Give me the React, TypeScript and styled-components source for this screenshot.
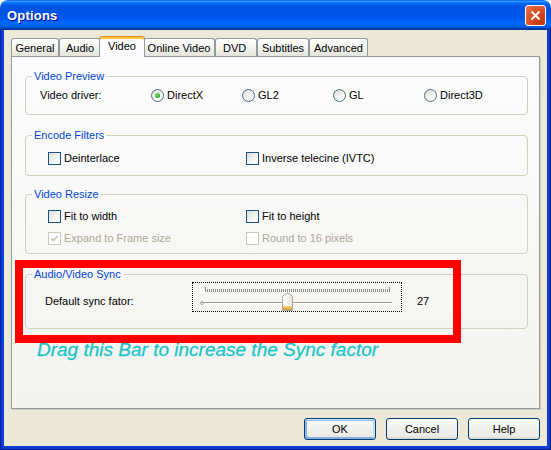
import React from 'react';
import styled, { createGlobalStyle } from 'styled-components';

const GlobalStyle = createGlobalStyle`
  html, body {
    margin: 0;
    padding: 0;
    background: #ffffff;
  }
  body {
    font-family: "Liberation Sans", Arial, sans-serif;
    font-size: 11px;
    color: #000000;
  }
`;

const Window = styled.div`
  width: 551px;
  height: 450px;
  display: flex;
  flex-direction: column;
`;

const TitleBar = styled.div`
  height: 30px;
  flex: none;
  box-sizing: border-box;
  border-radius: 8px 8px 0 0;
  padding: 0 5px 0 7px;
  display: flex;
  align-items: center;
  justify-content: space-between;
  background: linear-gradient(
    180deg,
    #0058ee 0%,
    #3593ff 4%,
    #288eff 6%,
    #127dff 8%,
    #036ffc 10%,
    #0262ee 14%,
    #0057e5 20%,
    #0054e3 24%,
    #0055eb 56%,
    #005bf5 66%,
    #026afe 76%,
    #0062ef 86%,
    #0052d6 92%,
    #0040ab 94%,
    #003092 100%
  );
`;

const Title = styled.span`
  color: #ffffff;
  font-weight: bold;
  font-size: 13px;
  letter-spacing: 0.2px;
  text-shadow: 1px 1px #0f1089;
`;

const CloseButton = styled.div`
  width: 21px;
  height: 21px;
  box-sizing: border-box;
  border: 1px solid #ffffff;
  border-radius: 3px;
  display: flex;
  align-items: center;
  justify-content: center;
  background: radial-gradient(circle at 85% 85%, #c53a11 0%, #d5471f 45%, #e6764e 100%);
`;

const Frame = styled.div`
  flex: 1;
  display: flex;
  padding: 0 4px 4px;
  background: #0a3fd2;
  box-shadow: inset 1px 0 #0019a0, inset -1px 0 #001a8c, inset 0 -1px #001a8c;
`;

const Body = styled.div`
  flex: 1;
  background: #ece9d8;
  padding: 6px 7px 0;
  display: flex;
  flex-direction: column;
`;

const TabStrip = styled.div`
  display: flex;
  align-items: flex-end;
  height: 21px;
  margin-bottom: -1px;
  position: relative;
  z-index: 1;
`;

const Tab = styled.div<{ $w: number; $active?: boolean; $left?: boolean }>`
  box-sizing: border-box;
  width: ${(p) => (p.$active ? p.$w + 4 : p.$w)}px;
  height: ${(p) => (p.$active ? 21 : 18)}px;
  margin: 0 ${(p) => (p.$active ? -2 : 0)}px ${(p) => (p.$active ? 0 : 1)}px;
  display: flex;
  align-items: center;
  justify-content: ${(p) => (p.$left ? 'flex-start' : 'center')};
  padding: ${(p) => (p.$left ? '0 0 0 7px' : '0')};
  padding-bottom: ${(p) => (p.$active ? 2 : 0)}px;
  border: 1px solid #919b9c;
  border-bottom: none;
  border-radius: 3px 3px 0 0;
  position: relative;
  z-index: ${(p) => (p.$active ? 2 : 1)};
  background: ${(p) =>
    p.$active ? '#fcfcfe' : 'linear-gradient(180deg, #ffffff 0%, #f3f3ef 55%, #e4e3dc 100%)'};
  border-top-color: ${(p) => (p.$active ? '#e68b2c' : '#919b9c')};
  box-shadow: ${(p) => (p.$active ? 'inset 0 2px #ffc73c' : 'none')};
`;

const Panel = styled.div`
  box-sizing: border-box;
  height: 353px;
  border: 1px solid #919b9c;
  background: linear-gradient(180deg, #fcfcfe 0%, #f4f3ee 100%);
  box-shadow: 1px 1px #d0cebf;
  padding: 13px 11px 0 13px;
  display: flex;
  flex-direction: column;
  position: relative;
`;

const Group = styled.fieldset<{ $h: number; $mt: number }>`
  box-sizing: border-box;
  height: ${(p) => p.$h}px;
  margin: ${(p) => p.$mt}px 0 0;
  padding: 0;
  min-width: 0;
  border: 1px solid #d0d0bf;
  border-radius: 4px;
`;

const Legend = styled.legend`
  color: #0046d5;
  line-height: 13px;
  padding: 0 2px;
  margin-left: 6px;
`;

const DriverRow = styled.div`
  display: grid;
  grid-template-columns: 111px 91px 91px 91px 1fr;
  align-items: center;
  height: 16px;
  margin-top: 4px;
  padding-left: 14px;
`;

const CheckRow = styled.div<{ $mt: number }>`
  display: grid;
  grid-template-columns: 198px 1fr;
  align-items: center;
  height: 16px;
  margin-top: ${(p) => p.$mt}px;
  padding-left: 22px;
`;

const Option = styled.label<{ $disabled?: boolean }>`
  display: inline-flex;
  align-items: center;
  gap: 3px;
  white-space: nowrap;
  color: ${(p) => (p.$disabled ? '#aca899' : '#000000')};
`;

const RadioDot = styled.span<{ $checked?: boolean }>`
  width: 13px;
  height: 13px;
  box-sizing: border-box;
  border-radius: 50%;
  border: 1px solid #4f6a86;
  background: linear-gradient(135deg, #dcdcd5 0%, #f2f2ee 50%, #ffffff 100%);
  display: inline-flex;
  align-items: center;
  justify-content: center;
  &::after {
    content: '';
    display: ${(p) => (p.$checked ? 'block' : 'none')};
    width: 5px;
    height: 5px;
    border-radius: 50%;
    background: radial-gradient(circle at 35% 35%, #7ee07a 0%, #21a121 80%);
  }
`;

const CheckBox = styled.span<{ $disabled?: boolean }>`
  width: 13px;
  height: 13px;
  box-sizing: border-box;
  border: 1px solid ${(p) => (p.$disabled ? '#cac8bb' : '#1c5180')};
  background: ${(p) =>
    p.$disabled ? '#ffffff' : 'linear-gradient(135deg, #dcdcd7 0%, #f5f5f2 60%, #ffffff 100%)'};
  display: inline-flex;
  align-items: center;
  justify-content: center;
`;

const SyncRow = styled.div`
  display: flex;
  align-items: flex-start;
  margin-top: 1px;
  padding-left: 19px;
`;

const SyncLabel = styled.span`
  width: 147px;
  margin-top: 13px;
  line-height: 13px;
`;

const SliderBox = styled.div`
  width: 210px;
  height: 30px;
  box-sizing: border-box;
  border: 1px dotted #000000;
  svg {
    display: block;
  }
`;

const SyncValue = styled.span`
  margin: 13px 0 0 15px;
  line-height: 13px;
`;

const Annotation = styled.div`
  margin: 10px 0 0 12px;
  color: #1cc4c8;
  font-size: 19px;
  font-style: italic;
  line-height: 22px;
  white-space: nowrap;
  -webkit-text-stroke: 0.3px #1cc4c8;
`;

const Highlight = styled.div`
  position: absolute;
  left: 3px;
  top: 203px;
  width: 446px;
  height: 83px;
  box-sizing: border-box;
  border: 8px solid #ff0000;
  pointer-events: none;
`;

const ButtonRow = styled.div`
  display: flex;
  justify-content: flex-end;
  gap: 10px;
  margin-top: 9px;
`;

const Button = styled.div<{ $primary?: boolean }>`
  width: 72px;
  height: 22px;
  box-sizing: border-box;
  border: 1px solid #003c74;
  border-radius: 3px;
  display: flex;
  align-items: center;
  justify-content: center;
  background: linear-gradient(180deg, #ffffff 0%, #f4f4f0 30%, #ecebe6 86%, #d6d0c5 100%);
  box-shadow: ${(p) =>
    p.$primary
      ? 'inset -1px 1px #cee7ff, inset 1px 2px #98b8ea, inset -2px 2px #bcd4f6, inset 1px -1px #89ade4, inset 2px -2px #89ade4'
      : 'none'};
`;

const tabs = [
  { label: 'General', w: 48 },
  { label: 'Audio', w: 42 },
  { label: 'Video', w: 42, active: true },
  { label: 'Online Video', w: 72 },
  { label: 'DVD', w: 42, left: true },
  { label: 'Subtitles', w: 52 },
  { label: 'Advanced', w: 59 },
];

const drivers = [
  { label: 'DirectX', checked: true },
  { label: 'GL2' },
  { label: 'GL' },
  { label: 'Direct3D' },
];

const Tick = ({ disabled }: { disabled?: boolean }) => (
  <svg width="9" height="9" viewBox="0 0 9 9">
    <path
      d="M1.5 4.5 L3.5 6.5 L7.5 2"
      fill="none"
      stroke={disabled ? '#cac8bb' : '#21a121'}
      strokeWidth="1.8"
    />
  </svg>
);

const Check: React.FC<{ label: string; checked?: boolean; disabled?: boolean }> = ({
  label,
  checked,
  disabled,
}) => (
  <Option $disabled={disabled}>
    <CheckBox $disabled={disabled}>{checked && <Tick disabled={disabled} />}</CheckBox>
    {label}
  </Option>
);

const Slider = () => {
  const ticks = Array.from({ length: 93 }, (_, i) => 12 + i * 2);
  return (
    <SliderBox>
      <svg width="208" height="28" viewBox="0 0 208 28">
        <defs>
          <linearGradient id="thumbBody" x1="0" y1="0" x2="1" y2="0">
            <stop offset="0" stopColor="#ffffff" />
            <stop offset="1" stopColor="#e6e3d8" />
          </linearGradient>
          <linearGradient id="thumbBand" x1="0" y1="0" x2="0" y2="1">
            <stop offset="0" stopColor="#f6d98c" />
            <stop offset="1" stopColor="#d99a2e" />
          </linearGradient>
        </defs>
        {ticks.map((x, i) => (
          <line
            key={x}
            x1={x + 0.5}
            x2={x + 0.5}
            y1={i === 0 || i === ticks.length - 1 ? 4 : 6}
            y2={9}
            stroke="#8c8c86"
            strokeWidth="1"
          />
        ))}
        <line x1="8" x2="199" y1="19.5" y2="19.5" stroke="#9d9c92" />
        <line x1="8" x2="199" y1="20.5" y2="20.5" stroke="#ffffff" />
        <circle cx="9" cy="20" r="1.5" fill="none" stroke="#b0afa5" />
        <path
          d="M89.5 14.5 Q89.5 13 91 12 L94.5 10 L98 12 Q99.5 13 99.5 14.5 L99.5 27.5 L89.5 27.5 Z"
          fill="url(#thumbBody)"
          stroke="#a8a597"
        />
        <rect x="90" y="23" width="9" height="4" fill="url(#thumbBand)" />
      </svg>
    </SliderBox>
  );
};

const App: React.FC = () => (
  <>
    <GlobalStyle />
    <Window>
      <TitleBar>
        <Title>Options</Title>
        <CloseButton>
          <svg width="11" height="11" viewBox="0 0 11 11">
            <path d="M1.5 1.5 L9.5 9.5 M9.5 1.5 L1.5 9.5" stroke="#ffffff" strokeWidth="2" />
          </svg>
        </CloseButton>
      </TitleBar>
      <Frame>
        <Body>
          <TabStrip>
            {tabs.map((t) => (
              <Tab key={t.label} $w={t.w} $active={t.active} $left={t.left}>
                {t.label}
              </Tab>
            ))}
          </TabStrip>
          <Panel>
            <Group $h={45} $mt={0}>
              <Legend>Video Preview</Legend>
              <DriverRow>
                <span>Video driver:</span>
                {drivers.map((d) => (
                  <Option key={d.label}>
                    <RadioDot $checked={d.checked} />
                    {d.label}
                  </Option>
                ))}
              </DriverRow>
            </Group>
            <Group $h={47} $mt={14}>
              <Legend>Encode Filters</Legend>
              <CheckRow $mt={8}>
                <Check label="Deinterlace" />
                <Check label="Inverse telecine (IVTC)" />
              </CheckRow>
            </Group>
            <Group $h={66} $mt={12}>
              <Legend>Video Resize</Legend>
              <CheckRow $mt={7}>
                <Check label="Fit to width" />
                <Check label="Fit to height" />
              </CheckRow>
              <CheckRow $mt={6}>
                <Check label="Expand to Frame size" checked disabled />
                <Check label="Round to 16 pixels" disabled />
              </CheckRow>
            </Group>
            <Group $h={61} $mt={14}>
              <Legend>Audio/Video Sync</Legend>
              <SyncRow>
                <SyncLabel>Default sync fator:</SyncLabel>
                <Slider />
                <SyncValue>27</SyncValue>
              </SyncRow>
            </Group>
            <Annotation>Drag this Bar to increase the Sync factor</Annotation>
            <Highlight />
          </Panel>
          <ButtonRow>
            <Button $primary>OK</Button>
            <Button>Cancel</Button>
            <Button>Help</Button>
          </ButtonRow>
        </Body>
      </Frame>
    </Window>
  </>
);

export default App;
